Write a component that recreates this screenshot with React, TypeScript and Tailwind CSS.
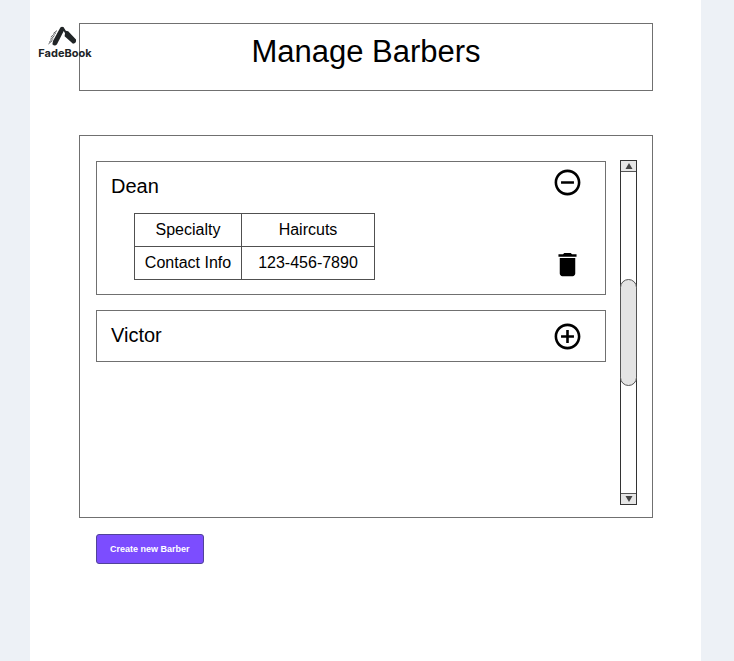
import { useState } from "react";
import { MdAddCircleOutline, MdDelete, MdRemoveCircleOutline } from "react-icons/md";

type Barber = { name: string; details: { label: string; value: string }[] };

const barbers: Barber[] = [
  {
    name: "Dean",
    details: [
      { label: "Specialty", value: "Haircuts" },
      { label: "Contact Info", value: "123-456-7890" },
    ],
  },
  { name: "Victor", details: [] },
];

function Logo() {
  return (
    <a href="#" className="absolute top-[26px] left-2 flex w-[54px] flex-col items-center text-[#202426]">
      <svg viewBox="0 0 34 21" className="h-[21px] w-[34px]" aria-hidden="true">
        <path d="M12.4 1.6 Q14 0 15.6 1.4 L16 4.4 L9 18.2 Q6.8 20.6 4.4 18.2 L5 15 L9.6 6.6 Z" fill="currentColor" />
        <path d="M14 1.8 L15.6 1.2 L17.8 4.8 L20.2 5.2 L28 13.6 Q28.6 17.6 25 17.8 L16.6 10.2 L17 7.2 Z" fill="currentColor" />
        <path d="M9 4.6 L5.4 7.4 M8 6.8 L2.8 11 M6.6 9.6 L2.2 13.4 M5.4 12.2 L1 16.4 M4.4 14.6 L.4 18" stroke="currentColor" strokeWidth=".7" fill="none" />
      </svg>
      <span className="font-['Inter','Liberation_Sans',sans-serif] text-[11px] leading-3 font-bold">FadeBook</span>
    </a>
  );
}

function BarberCard({ barber, initiallyOpen }: { barber: Barber; initiallyOpen: boolean }) {
  const [open, setOpen] = useState(initiallyOpen);
  const expanded = open && barber.details.length > 0;
  return (
    <li className="border border-[#707070] pr-[22px] pl-[14px]">
      <div className={expanded ? "flex h-[51px] items-start justify-between pt-[5px]" : "flex h-[50px] items-center justify-between"}>
        <h2 className={expanded ? "pt-[7px] text-xl leading-6" : "pb-[2px] text-xl leading-6"}>{barber.name}</h2>
        <button
          type="button"
          aria-label={expanded ? `Collapse ${barber.name}` : `Expand ${barber.name}`}
          onClick={() => setOpen(!open)}
        >
          {expanded ? <MdRemoveCircleOutline size={31} /> : <MdAddCircleOutline size={31} />}
        </button>
      </div>
      {expanded && (
        <div className="flex items-end justify-between pb-[14px] pl-[23px]">
          <table className="w-[241px] table-fixed border-collapse text-center text-base leading-8">
            <colgroup>
              <col className="w-[107px]" />
              <col />
            </colgroup>
            <tbody>
              {barber.details.map((d) => (
                <tr key={d.label}>
                  <th scope="row" className="border border-[#505050] p-0 font-normal">{d.label}</th>
                  <td className="border border-[#505050] p-0">{d.value}</td>
                </tr>
              ))}
            </tbody>
          </table>
          <button type="button" aria-label={`Delete ${barber.name}`}>
            <MdDelete size={31} />
          </button>
        </div>
      )}
    </li>
  );
}

function ScrollRail() {
  return (
    <div className="flex w-[17px] shrink-0 flex-col border border-[#333333]">
      <button type="button" aria-label="Scroll up" className="flex h-[11px] items-center justify-center border-b border-[#555555] bg-[#e6e6e6]">
        <svg viewBox="0 0 8 6" className="h-[6px] w-2"><path d="M4 0 7.5 6H.5Z" fill="#444444" /></svg>
      </button>
      <div className="-mx-px flex flex-1 flex-col pt-[107px]">
        <div className="h-[107px] rounded-full border border-[#555555] bg-[#e4e4e4]" />
      </div>
      <button type="button" aria-label="Scroll down" className="flex h-[11px] items-center justify-center border-t border-[#555555] bg-[#e6e6e6]">
        <svg viewBox="0 0 8 6" className="h-[6px] w-2"><path d="M4 6 .5 0h7Z" fill="#444444" /></svg>
      </button>
    </div>
  );
}

export default function App() {
  return (
    <div className="min-h-screen bg-[#edf1f6] pr-[33px] pl-[30px] font-['Liberation_Sans',Arial,sans-serif] text-black">
      <div className="relative min-h-screen bg-white pt-[23px] pr-12 pb-8 pl-[49px]">
        <header className="border border-[#707070] pt-[10px] pb-5">
          <h1 className="text-center text-[31px] leading-9">Manage Barbers</h1>
        </header>
        <Logo />
        <main className="pt-11">
          <section className="flex min-h-[383px] gap-[14px] border border-[#707070] pt-6 pr-[15px] pb-3 pl-4">
            <ul className="flex flex-1 flex-col gap-[15px] pt-px">
              {barbers.map((b, i) => (
                <BarberCard key={b.name} barber={b} initiallyOpen={i === 0} />
              ))}
            </ul>
            <ScrollRail />
          </section>
          <button
            type="button"
            className="mt-4 ml-[17px] rounded-[3px] border border-[#51439a] bg-[#7c4dff] px-[13px] py-[7px] text-[9px] leading-[14px] font-bold text-white"
          >
            Create new Barber
          </button>
        </main>
      </div>
    </div>
  );
}
